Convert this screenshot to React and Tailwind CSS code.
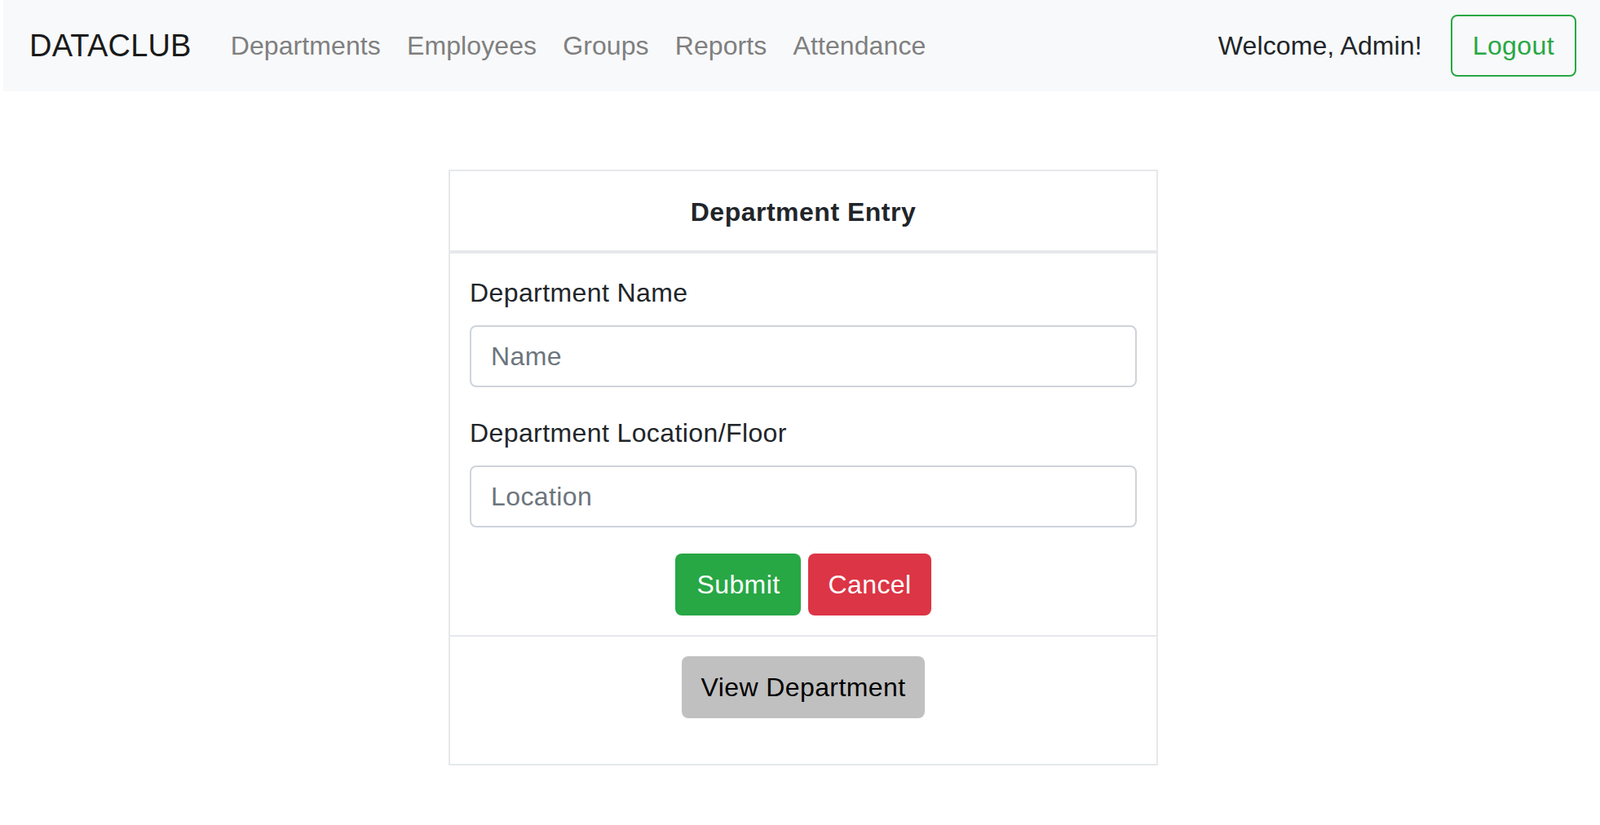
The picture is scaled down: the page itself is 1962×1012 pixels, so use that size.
const links = ['Departments', 'Employees', 'Groups', 'Reports', 'Attendance'];

const Navbar = () => (
  <nav className="ml-[4px] flex h-[112px] items-center bg-[#f8f9fa] pl-[32px] pr-[29px]">
    <a className="mr-[32px] text-[38px] leading-[48px] tracking-[0.2px] text-[#1a1a1a]">DATACLUB</a>
    <ul className="flex">
      {links.map((link) => (
        <li key={link}>
          <a className="block px-[16px] text-[32px] leading-[48px] tracking-[0.1px] text-[#7f7f80]">{link}</a>
        </li>
      ))}
    </ul>
    <div className="ml-auto flex items-center">
      <span className="mr-[35px] text-[32px] leading-[48px] tracking-[0.1px] text-[#212529]">Welcome, Admin!</span>
      <button className="h-[76px] rounded-[8px] border-2 border-[#28a745] px-[25px] text-[32px] leading-[48px] text-[#28a745]">
        Logout
      </button>
    </div>
  </nav>
);

const Field = ({ label, placeholder }) => (
  <div className="mb-[32px]">
    <label className="mb-[16px] block text-[32px] leading-[48px] text-[#212529]">{label}</label>
    <input
      placeholder={placeholder}
      className="block h-[76px] w-full rounded-[8px] border-2 border-[#ced4da] px-[24px] text-[32px] text-[#495057] outline-none placeholder:text-[#6c757d]"
    />
  </div>
);

export default function App() {
  return (
    <div
      className="min-h-[1012px] bg-white tracking-[0.4px]"
      style={{ fontFamily: '"Liberation Sans", Arial, sans-serif' }}
    >
      <Navbar />
      <div className="flex justify-center pl-[8px] pt-[96px]">
        <div className="w-[870px] border-2 border-[#e6e8eb] bg-white">
          <div className="border-b-4 border-[#e6e8eb] pb-[23px] pt-[26px] text-center text-[32px] font-bold leading-[48px] tracking-[0.5px] text-[#212529]">
            Department Entry
          </div>
          <form className="p-[24px]" onSubmit={(e) => e.preventDefault()}>
            <Field label="Department Name" placeholder="Name" />
            <Field label="Department Location/Floor" placeholder="Location" />
            <div className="flex justify-center gap-[9px]">
              <button className="h-[76px] rounded-[8px] bg-[#28a745] px-[26px] text-[32px] text-white">Submit</button>
              <button className="h-[76px] rounded-[8px] bg-[#dc3545] px-[24px] text-[32px] text-white">Cancel</button>
            </div>
          </form>
          <div className="flex justify-center border-t-2 border-[#e6e8eb] pb-[56px] pt-[24px]">
            <button className="h-[76px] rounded-[8px] bg-[#c0c0c0] px-[24px] text-[32px] text-black">View Department</button>
          </div>
        </div>
      </div>
    </div>
  );
}
